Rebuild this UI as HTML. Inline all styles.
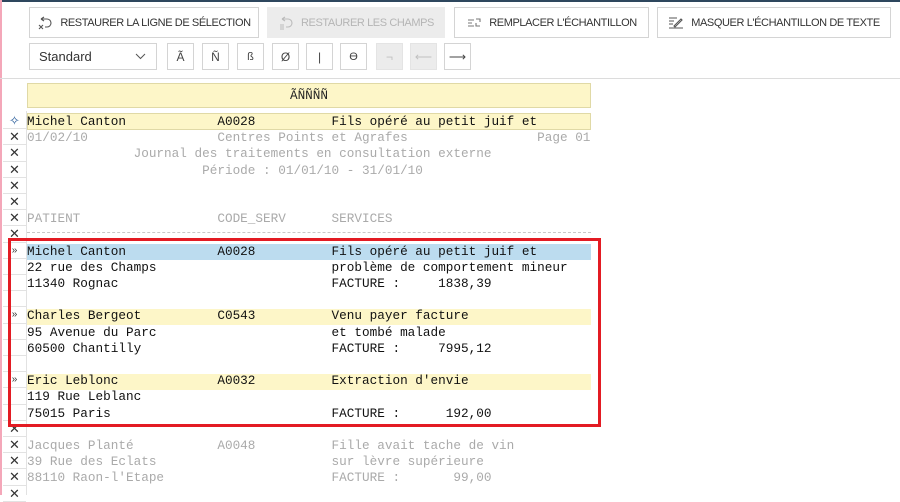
<!DOCTYPE html>
<html><head><meta charset="utf-8"><style>
*{margin:0;padding:0;box-sizing:border-box}
body{width:900px;height:495px;overflow:hidden;background:#fff;position:relative;font-family:"Liberation Sans",sans-serif}
.top{position:absolute;left:0;top:0;width:900px;height:2px;background:#2e475e}
.pink{position:absolute;left:0;top:0;width:2px;height:495px;background:#f4a7b9}
.btn{position:absolute;top:7px;height:31px;border:1px solid #d4d4d4;background:#fff;font-size:11px;color:#333;display:flex;align-items:center;justify-content:center;gap:7px;letter-spacing:-0.4px;white-space:nowrap}
.btn.dis{background:#ececec;color:#b5b5b5;border-color:#ececec}
.sb{position:absolute;top:43px;width:27px;height:27px;border:1px solid #d4d4d4;background:#fff;font-size:12px;color:#444;display:flex;align-items:center;justify-content:center}
.sb.dis{background:#ececec;color:#c0c0c0;border-color:#e4e4e4}
.sel{position:absolute;left:29px;top:43px;width:128px;height:27px;border:1px solid #d4d4d4;font-size:13px;color:#333;padding-left:9px;line-height:25px}
.sep{position:absolute;left:0;top:78px;width:900px;height:1px;background:#dcdcdc}
.hdr{position:absolute;left:27px;top:83px;width:564px;height:25px;background:#fdf6c8;border:1px solid #e0d9a6;text-align:center;font:12.7px "Liberation Mono",monospace;line-height:23px;color:#222}
.mono{position:absolute;left:27px;font:12.7px "Liberation Mono",monospace;white-space:pre;line-height:16.2px}
.g{color:#aaa}.k{color:#111}
.bar{position:absolute;left:27px;width:564px;height:16px}
.gut{position:absolute;left:3px;width:23px;height:16.2px;border-bottom:1px solid #e2e2e2;font-size:13px;color:#333;text-align:center;line-height:15px}
.vline{position:absolute;left:26px;top:111px;width:1px;height:384px;background:#e2e2e2}
.red{position:absolute;left:8px;top:238px;width:593px;height:189px;border:3px solid #e31b23}
</style></head><body>
<div class="top"></div><div class="pink"></div>
<div class="btn" style="left:29px;width:230px"><svg width="16" height="14" viewBox="0 0 16 14"><path d="M4 3h6a4 4 0 0 1 0 8H8M4 3l3-2M4 3l3 2M2 9l4 4M6 9l-4 4" stroke="#555" fill="none" stroke-width="1.1"/></svg>RESTAURER LA LIGNE DE SÉLECTION</div>
<div class="btn dis" style="left:267px;width:178px"><svg width="16" height="14" viewBox="0 0 16 14"><path d="M4 3h6a4 4 0 0 1 0 8H8M4 3l3-2M4 3l3 2M2 9h4M2 11h4M2 13h4" stroke="#bbb" fill="none" stroke-width="1.1"/></svg>RESTAURER LES CHAMPS</div>
<div class="btn" style="left:454px;width:195px"><svg width="16" height="14" viewBox="0 0 16 14"><path d="M2 4h6M2 7h4M2 10h6M10 3h4v3M14 10h-4V7" stroke="#777" fill="none" stroke-width="1.1"/></svg>REMPLACER L'ÉCHANTILLON</div>
<div class="btn" style="left:657px;width:234px"><svg width="16" height="14" viewBox="0 0 16 14"><path d="M1 2h8M1 5h5M1 8h4M1 12h14M6 10l7-7 1 1-7 7z" stroke="#555" fill="none" stroke-width="1.1"/></svg>MASQUER L'ÉCHANTILLON DE TEXTE</div>
<div class="sel">Standard<svg style="position:absolute;right:10px;top:9px" width="11" height="7" viewBox="0 0 11 7"><path d="M1 1l4.5 4.5L10 1" stroke="#555" fill="none"/></svg></div>
<div class="sb" style="left:167px">Ã</div><div class="sb" style="left:202px">Ñ</div><div class="sb" style="left:237px;font-size:11px">ß</div><div class="sb" style="left:272px">Ø</div><div class="sb" style="left:306px">|</div><div class="sb" style="left:340px;font-size:11px">ϴ</div><div class="sb dis" style="left:376px">¬</div><div class="sb dis" style="left:410px">⟵</div><div class="sb" style="left:444px">⟶</div>
<div class="sep"></div>
<div class="hdr">ÃÑÑÑÑ</div>
<div class="vline"></div>
<div class="bar" style="top:113px;background:#fdf6c8;border:1px solid #e0d9a6;height:17px"></div>
<div class="bar" style="top:244px;background:#bcdcef"></div>
<div class="bar" style="top:309px;background:#fdf6c8"></div>
<div class="bar" style="top:374px;background:#fdf6c8"></div>
<div style="position:absolute;left:27px;top:232px;width:564px;border-top:1px dashed #c8c8c8"></div>
<div class="gut" style="top:113px;color:#2a5d9a">✧</div>
<div class="gut" style="top:129.2px">✕</div><div class="gut" style="top:145.4px">✕</div><div class="gut" style="top:161.6px">✕</div><div class="gut" style="top:177.8px">✕</div><div class="gut" style="top:194px">✕</div><div class="gut" style="top:210.2px">✕</div><div class="gut" style="top:226.4px">✕</div>
<div class="gut" style="top:242.6px;font-size:10px">»</div><div class="gut" style="top:258.8px"></div><div class="gut" style="top:275px"></div><div class="gut" style="top:291.2px"></div>
<div class="gut" style="top:307.4px;font-size:10px">»</div><div class="gut" style="top:323.6px"></div><div class="gut" style="top:339.8px"></div><div class="gut" style="top:356px"></div>
<div class="gut" style="top:372.2px;font-size:10px">»</div><div class="gut" style="top:388.4px"></div><div class="gut" style="top:404.6px"></div>
<div class="gut" style="top:420.8px">✕</div><div class="gut" style="top:437px">✕</div><div class="gut" style="top:453.2px">✕</div><div class="gut" style="top:469.4px">✕</div><div class="gut" style="top:485.6px">✕</div>
<div class="mono" style="top:114px"><span class="k">Michel Canton            A0028          Fils opéré au petit juif et</span>
<span class="g">01/02/10                 Centres Points et Agrafes                 Page 01
              Journal des traitements en consultation externe
                       Période : 01/01/10 - 31/01/10


PATIENT                  CODE_SERV      SERVICES
</span>
<span class="k">Michel Canton            A0028          Fils opéré au petit juif et
22 rue des Champs                       problème de comportement mineur
11340 Rognac                            FACTURE :     1838,39

Charles Bergeot          C0543          Venu payer facture
95 Avenue du Parc                       et tombé malade
60500 Chantilly                         FACTURE :     7995,12

Eric Leblonc             A0032          Extraction d'envie
119 Rue Leblanc
75015 Paris                             FACTURE :      192,00</span>
<span class="g">
Jacques Planté           A0048          Fille avait tache de vin
39 Rue des Eclats                       sur lèvre supérieure
88110 Raon-l'Etape                      FACTURE :       99,00</span></div>
<div class="red"></div>
</body></html>
